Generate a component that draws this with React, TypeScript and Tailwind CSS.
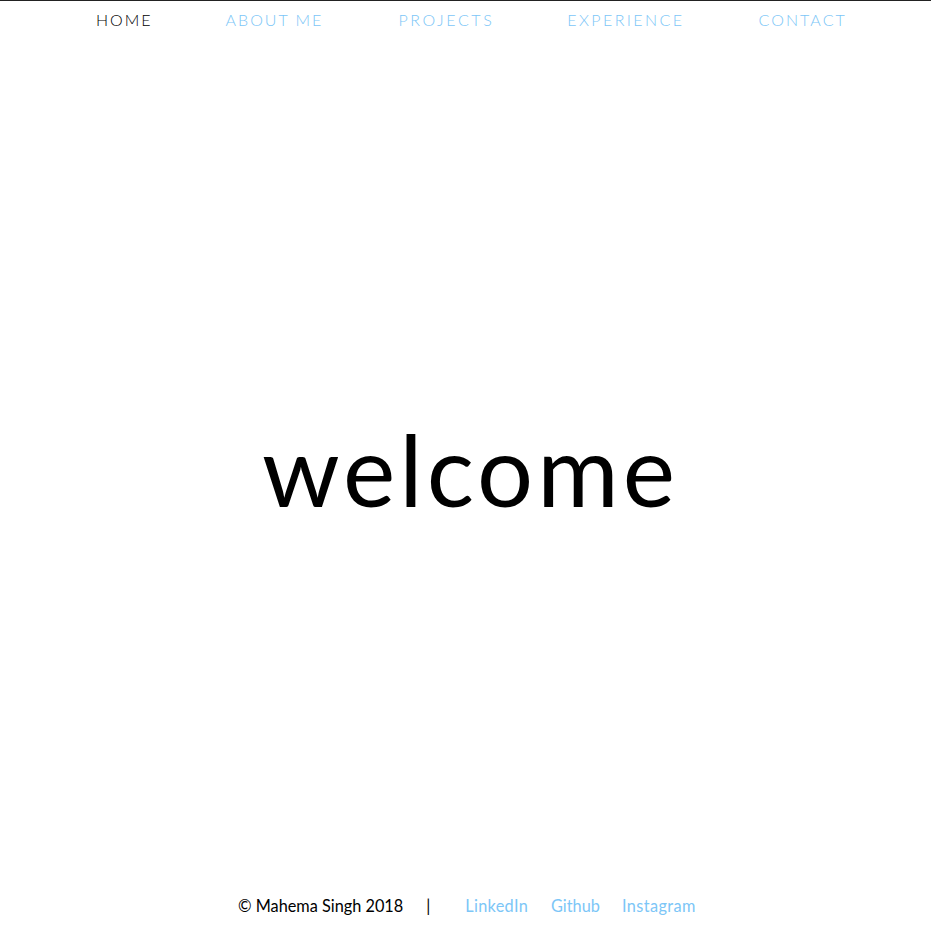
import React from "react";

export default function App() {
  const font = { fontFamily: "Lato, 'Noto Sans', sans-serif" };
  return (
    <div className="w-[931px] h-[938px] bg-white flex flex-col border-t border-[#222]" style={font}>
      <nav className="h-[38px] flex items-center justify-start pl-[96px] text-[16px] font-light tracking-[2px]">
        <a className="text-black">HOME</a>
        <a className="text-[#7cc6f7] ml-[73px]">ABOUT ME</a>
        <a className="text-[#7cc6f7] ml-[75px] tracking-[2.6px]">PROJECTS</a>
        <a className="text-[#7cc6f7] ml-[73px] tracking-[2.4px]">EXPERIENCE</a>
        <a className="text-[#7cc6f7] ml-[74px] tracking-[2.1px]">CONTACT</a>
      </nav>
      <main className="flex-1 flex items-center justify-center pl-[10px] pt-[24px]">
        <h1 className="text-[99px] font-normal leading-none tracking-[4px] text-black">welcome</h1>
      </main>
      <footer className="h-[64px] flex items-center justify-start pl-[238px] text-[16.3px] font-normal">
        <span className="text-black">© Mahema Singh 2018</span>
        <span className="text-black ml-[23px]">|</span>
        <a className="text-[#7cc6f7] ml-[35px] tracking-[0.3px]">LinkedIn</a>
        <a className="text-[#7cc6f7] ml-[23px]">Github</a>
        <a className="text-[#7cc6f7] ml-[22px] tracking-[0.4px]">Instagram</a>
      </footer>
    </div>
  );
}
